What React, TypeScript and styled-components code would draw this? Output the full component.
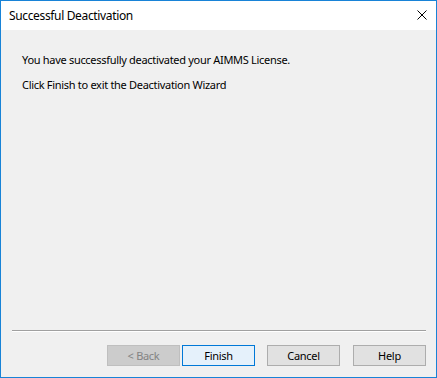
import styled, { createGlobalStyle } from 'styled-components'

const GlobalStyle = createGlobalStyle`
  html, body {
    margin: 0;
    padding: 0;
    background: #f0f0f0;
  }
  * {
    box-sizing: border-box;
  }
`

const Window = styled.div`
  width: 437px;
  height: 378px;
  border: 1px solid #1883d7;
  background: #f0f0f0;
  display: flex;
  flex-direction: column;
  font-family: 'Noto Sans', 'DejaVu Sans', sans-serif;
  font-size: 11px;
  letter-spacing: -0.3px;
  color: #000;
`

const TitleBar = styled.div`
  height: 29px;
  background: #fff;
  display: flex;
  align-items: center;
  justify-content: space-between;
  padding-left: 8px;
`

const Title = styled.span`
  font-size: 12px;
  letter-spacing: -0.35px;
  color: #000;
  padding-bottom: 1px;
`

const CloseButton = styled.div`
  width: 28px;
  height: 29px;
  padding-bottom: 2px;
  display: flex;
  align-items: center;
  justify-content: center;
`

const Body = styled.div`
  flex: 1;
  display: flex;
  flex-direction: column;
  padding: 22px 21px 0;
  gap: 9px;
`

const Line = styled.p`
  margin: 0;
  line-height: 16px;
`

const Footer = styled.div`
  padding: 0 10px 11px 11px;
  display: flex;
  flex-direction: column;
`

const Separator = styled.div`
  height: 2px;
  border-top: 1px solid #a0a0a0;
  border-bottom: 1px solid #fff;
  margin-bottom: 13px;
`

const ButtonRow = styled.div`
  display: flex;
  justify-content: flex-end;
`

const Button = styled.button<{ $variant?: 'default' | 'primary' | 'disabled'; $gap?: number }>`
  width: 73px;
  height: 21px;
  margin-left: ${({ $gap }) => $gap ?? 12}px;
  padding: 0;
  font-family: inherit;
  font-size: 11px;
  letter-spacing: inherit;
  border: 1px solid
    ${({ $variant }) =>
      $variant === 'primary' ? '#0078d7' : $variant === 'disabled' ? '#bfbfbf' : '#adadad'};
  background: ${({ $variant }) =>
    $variant === 'primary' ? '#e5f1fb' : $variant === 'disabled' ? '#cccccc' : '#e1e1e1'};
  color: ${({ $variant }) => ($variant === 'disabled' ? '#838383' : '#000')};
`

export default function App() {
  return (
    <>
      <GlobalStyle />
      <Window>
        <TitleBar>
          <Title>Successful Deactivation</Title>
          <CloseButton>
            <svg width="10" height="10" viewBox="0 0 10 10">
              <path d="M0.5 0.5 L9.5 9.5 M9.5 0.5 L0.5 9.5" stroke="#000" strokeWidth="1" />
            </svg>
          </CloseButton>
        </TitleBar>
        <Body>
          <Line>You have successfully deactivated your AIMMS License.</Line>
          <Line>Click Finish to exit the Deactivation Wizard</Line>
        </Body>
        <Footer>
          <Separator />
          <ButtonRow>
            <Button $variant="disabled" disabled>&lt; Back</Button>
            <Button $variant="primary" $gap={2}>Finish</Button>
            <Button>Cancel</Button>
            <Button $gap={13}>Help</Button>
          </ButtonRow>
        </Footer>
      </Window>
    </>
  )
}
